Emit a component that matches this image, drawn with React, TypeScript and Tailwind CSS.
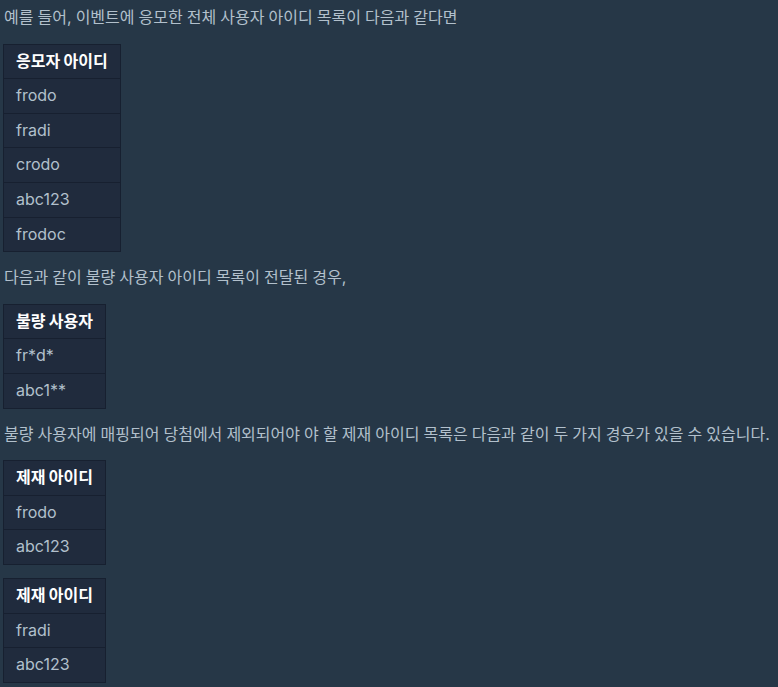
import React from "react";

const font = { fontFamily: 'Inter, "Noto Sans CJK KR", sans-serif' };

function T({ head, rows }: { head: string; rows: string[] }) {
  return (
    <table className="border-collapse bg-[#202b3d] self-start">
      <thead>
        <tr>
          <th className="border border-[#172030] px-3 py-1 text-left font-bold text-white leading-[1.6]">{head}</th>
        </tr>
      </thead>
      <tbody>
        {rows.map((r, i) => (
          <tr key={i}>
            <td className="border border-[#172030] px-3 py-1 leading-[1.6] text-[#b2c0cc]">{r}</td>
          </tr>
        ))}
      </tbody>
    </table>
  );
}

export default function App() {
  return (
    <div className="w-[778px] h-[687px] overflow-hidden bg-[#263747] text-[#b2c0cc] text-[16px] [word-spacing:-0.42px]" style={font}>
      <div className="flex flex-col gap-[13px] pl-[3px] pt-[5px]">
        <p className="leading-[1.6] pl-px">예를 들어, 이벤트에 응모한 전체 사용자 아이디 목록이 다음과 같다면</p>
        <T head="응모자 아이디" rows={["frodo", "fradi", "crodo", "abc123", "frodoc"]} />
        <p className="leading-[1.6] pl-px">다음과 같이 불량 사용자 아이디 목록이 전달된 경우,</p>
        <T head="불량 사용자" rows={["fr*d*", "abc1**"]} />
        <p className="leading-[1.6] pl-px">불량 사용자에 매핑되어 당첨에서 제외되어야 야 할 제재 아이디 목록은 다음과 같이 두 가지 경우가 있을 수 있습니다.</p>
        <T head="제재 아이디" rows={["frodo", "abc123"]} />
        <T head="제재 아이디" rows={["fradi", "abc123"]} />
      </div>
    </div>
  );
}
